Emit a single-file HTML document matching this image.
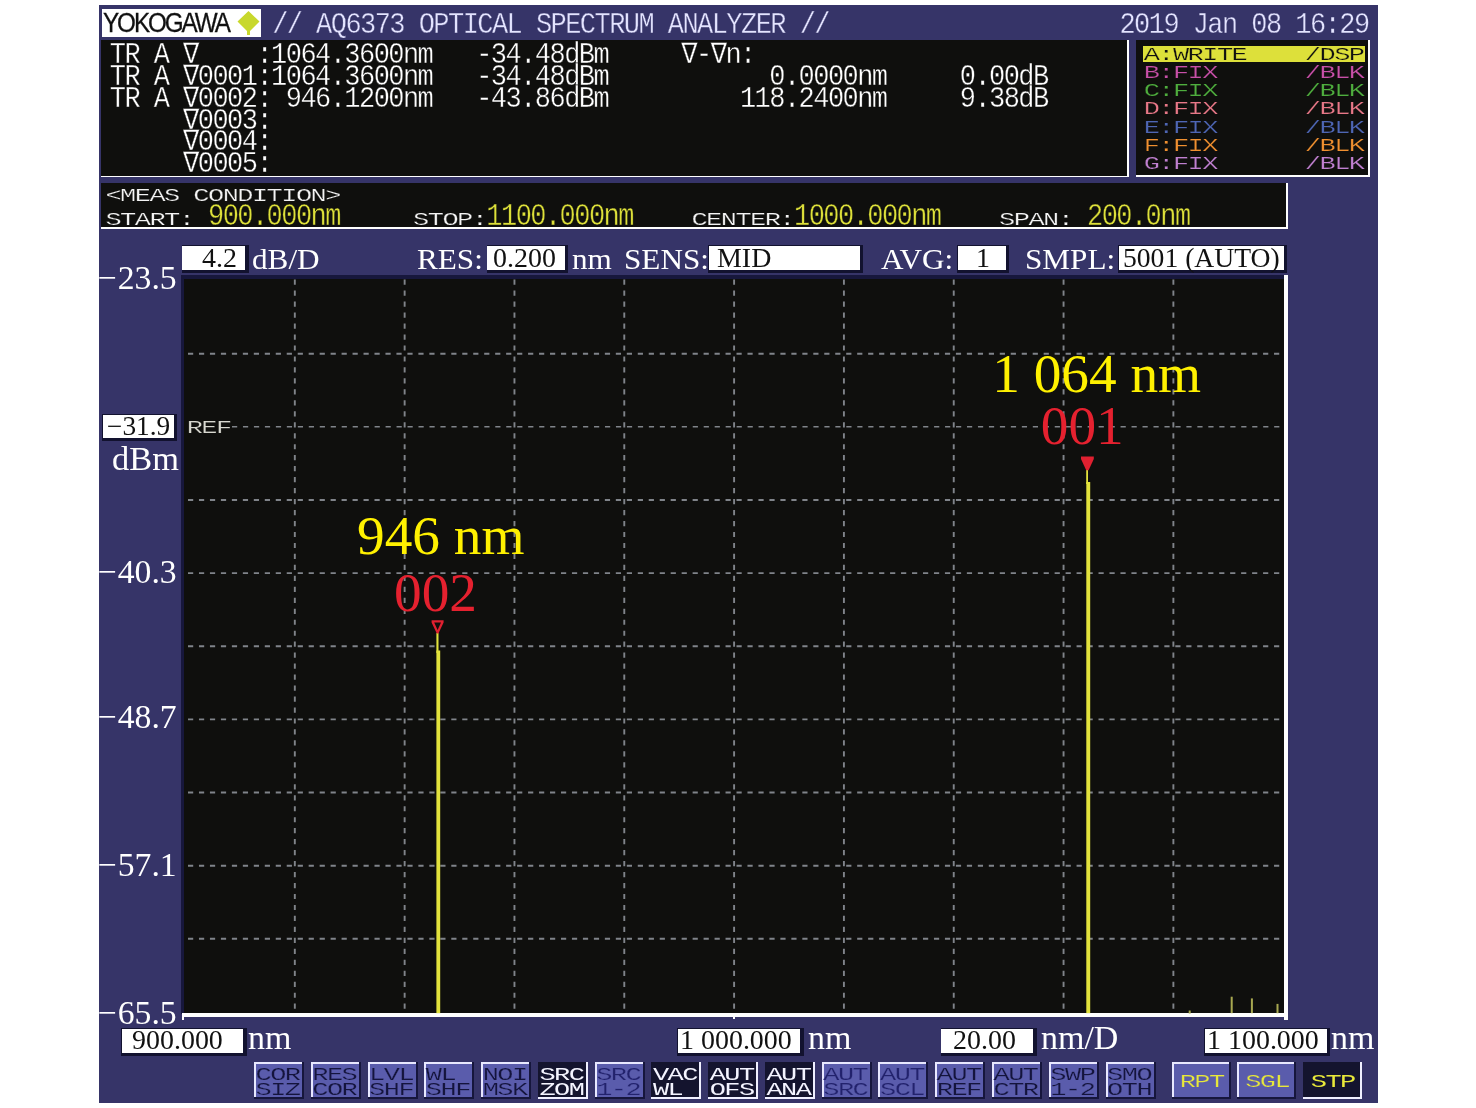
<!DOCTYPE html>
<html lang="en"><head><meta charset="utf-8"><title>AQ6373 Optical Spectrum Analyzer</title>
<style>
html,body{margin:0;padding:0;background:#fff;}
body{width:1476px;height:1108px;position:relative;overflow:hidden;}
#screen{position:absolute;left:0;top:0;width:1476px;height:1108px;will-change:transform;}
.r{position:absolute;}
.m,.s,.logo{position:absolute;white-space:pre;line-height:1;transform-origin:0 0;}
.m{font-family:"Liberation Mono","DejaVu Sans Mono",monospace;-webkit-text-stroke:0.35px #0f0f0d;}
.tb{-webkit-text-stroke-color:#363468;}
.ty{-webkit-text-stroke-color:#dde03a;}
.tk{-webkit-text-stroke-color:#5a5cac;}
.tkd{-webkit-text-stroke:0;}
.w{font-weight:normal;}
.s{font-family:"Liberation Serif",serif;}
.logo{font-family:"Liberation Sans",sans-serif;font-size:27px;letter-spacing:-2.3px;color:#111;-webkit-text-stroke:0.3px #111;transform:scale(0.898,1);}
</style></head>
<body>
<div id="screen">
<div class="r" style="left:98.70px;top:5.20px;width:1279.30px;height:1097.60px;background:#363468;"></div>
<div class="r" style="left:101.80px;top:9.00px;width:159.20px;height:27.60px;background:#fff;"></div>
<span class="logo" style="left:103.0px;top:10.2px;">YOKOGAWA</span>
<svg class="r" style="left:232.8px;top:10px" width="32" height="27" viewBox="0 0 32 27"><path d="M15.5 1 L26.5 11.5 L17 21 L17 25 L14 25 L14 21 L4.5 11.5 Z" fill="#c8d82c"/></svg>
<span class="m tb" style="left:272.15px;top:10.85px;font-size:27.0px;letter-spacing:-1.550px;color:#e4e4ff;transform:scale(1.0,1.09);">// AQ6373 OPTICAL SPECTRUM ANALYZER //</span>
<span class="m tb" style="left:1119.45px;top:10.85px;font-size:27.0px;letter-spacing:-1.550px;color:#e4e4ff;transform:scale(1.0,1.09);">2019 Jan 08 16:29</span>
<div class="r" style="left:100.50px;top:40.00px;width:1028.10px;height:137.30px;background:#fff;"></div>
<div class="r" style="left:100.50px;top:40.00px;width:1026.20px;height:135.50px;background:#0f0f0d;"></div>
<span class="m" style="left:109.85px;top:41.45px;font-size:27.0px;letter-spacing:-1.550px;color:#fff;transform:scale(1.0,1.09);">TR A ∇    :1064.3600nm   -34.48dBm     ∇-∇n:</span>
<span class="m" style="left:109.85px;top:63.15px;font-size:27.0px;letter-spacing:-1.550px;color:#fff;transform:scale(1.0,1.09);">TR A ∇0001:1064.3600nm   -34.48dBm           0.0000nm     0.00dB</span>
<span class="m" style="left:109.85px;top:84.85px;font-size:27.0px;letter-spacing:-1.550px;color:#fff;transform:scale(1.0,1.09);">TR A ∇0002: 946.1200nm   -43.86dBm         118.2400nm     9.38dB</span>
<span class="m" style="left:183.10px;top:106.55px;font-size:27.0px;letter-spacing:-1.550px;color:#fff;transform:scale(1.0,1.09);">∇0003:</span>
<span class="m" style="left:183.10px;top:128.25px;font-size:27.0px;letter-spacing:-1.550px;color:#fff;transform:scale(1.0,1.09);">∇0004:</span>
<span class="m" style="left:183.10px;top:150.05px;font-size:27.0px;letter-spacing:-1.550px;color:#fff;transform:scale(1.0,1.09);">∇0005:</span>
<div class="r" style="left:1136.20px;top:40.00px;width:234.10px;height:137.00px;background:#fff;"></div>
<div class="r" style="left:1136.20px;top:40.00px;width:231.90px;height:135.00px;background:#0f0f0d;"></div>
<div class="r" style="left:1142.60px;top:46.10px;width:222.00px;height:15.50px;background:#dde03a;"></div>
<span class="m w ty" style="left:1143.65px;top:46.13px;font-size:27.0px;letter-spacing:-1.550px;color:#101010;transform:scale(1.0,0.68);">A:WRITE    /DSP</span>
<span class="m w" style="left:1143.65px;top:64.43px;font-size:27.0px;letter-spacing:-1.550px;color:#c850a8;transform:scale(1.0,0.68);">B:FIX      /BLK</span>
<span class="m w" style="left:1143.65px;top:82.13px;font-size:27.0px;letter-spacing:-1.550px;color:#4fae3e;transform:scale(1.0,0.68);">C:FIX      /BLK</span>
<span class="m w" style="left:1143.65px;top:100.33px;font-size:27.0px;letter-spacing:-1.550px;color:#e87888;transform:scale(1.0,0.68);">D:FIX      /BLK</span>
<span class="m w" style="left:1143.65px;top:118.53px;font-size:27.0px;letter-spacing:-1.550px;color:#4e66b4;transform:scale(1.0,0.68);">E:FIX      /BLK</span>
<span class="m w" style="left:1143.65px;top:136.93px;font-size:27.0px;letter-spacing:-1.550px;color:#f09030;transform:scale(1.0,0.68);">F:FIX      /BLK</span>
<span class="m w" style="left:1143.65px;top:155.33px;font-size:27.0px;letter-spacing:-1.550px;color:#c080d0;transform:scale(1.0,0.68);">G:FIX      /BLK</span>
<div class="r" style="left:101.00px;top:183.20px;width:1187.00px;height:46.10px;background:#fff;"></div>
<div class="r" style="left:101.00px;top:183.20px;width:1185.00px;height:44.10px;background:#0f0f0d;"></div>
<span class="m w" style="left:105.45px;top:186.73px;font-size:27.0px;letter-spacing:-1.550px;color:#f4f4f4;transform:scale(1.0,0.68);">&lt;MEAS CONDITION&gt;</span>
<span class="m w" style="left:105.45px;top:210.93px;font-size:27.0px;letter-spacing:-1.550px;color:#f4f4f4;transform:scale(1.0,0.68);">START:</span>
<span class="m" style="left:208.00px;top:202.33px;font-size:27.0px;letter-spacing:-1.550px;color:#dde03a;transform:scale(1.0,1.13);">900.000nm</span>
<span class="m w" style="left:413.10px;top:210.93px;font-size:27.0px;letter-spacing:-1.550px;color:#f4f4f4;transform:scale(1.0,0.68);">STOP:</span>
<span class="m" style="left:486.35px;top:202.33px;font-size:27.0px;letter-spacing:-1.550px;color:#dde03a;transform:scale(1.0,1.13);">1100.000nm</span>
<span class="m w" style="left:691.45px;top:210.93px;font-size:27.0px;letter-spacing:-1.550px;color:#f4f4f4;transform:scale(1.0,0.68);">CENTER:</span>
<span class="m" style="left:794.00px;top:202.33px;font-size:27.0px;letter-spacing:-1.550px;color:#dde03a;transform:scale(1.0,1.13);">1000.000nm</span>
<span class="m w" style="left:999.10px;top:210.93px;font-size:27.0px;letter-spacing:-1.550px;color:#f4f4f4;transform:scale(1.0,0.68);">SPAN:</span>
<span class="m" style="left:1087.00px;top:202.33px;font-size:27.0px;letter-spacing:-1.550px;color:#dde03a;transform:scale(1.0,1.13);">200.0nm</span>
<div class="r" style="left:181.60px;top:245.00px;width:67.10px;height:28.40px;background:#12122f;"></div>
<div class="r" style="left:182.40px;top:245.80px;width:63.10px;height:24.60px;background:#fff;"></div>
<span class="s" style="left:202.00px;top:244.99px;font-size:27.0px;color:#111;transform:scaleX(1.035);">4.2</span>
<span class="s" style="left:251.50px;top:244.06px;font-size:30.14px;color:#fff;transform:scaleX(1.035);">dB/D</span>
<span class="s" style="left:416.50px;top:244.06px;font-size:30.14px;color:#fff;transform:scaleX(1.035);">RES:</span>
<div class="r" style="left:486.50px;top:245.00px;width:81.90px;height:28.40px;background:#12122f;"></div>
<div class="r" style="left:487.30px;top:245.80px;width:77.90px;height:24.60px;background:#fff;"></div>
<span class="s" style="left:492.50px;top:244.99px;font-size:27.0px;color:#111;transform:scaleX(1.035);">0.200</span>
<span class="s" style="left:571.50px;top:244.06px;font-size:30.14px;color:#fff;transform:scaleX(1.035);">nm</span>
<span class="s" style="left:623.50px;top:244.06px;font-size:30.14px;color:#fff;transform:scaleX(1.035);">SENS:</span>
<div class="r" style="left:708.30px;top:245.00px;width:154.90px;height:28.40px;background:#12122f;"></div>
<div class="r" style="left:709.10px;top:245.80px;width:150.90px;height:24.60px;background:#fff;"></div>
<span class="s" style="left:716.50px;top:244.99px;font-size:27.0px;color:#111;transform:scaleX(1.035);">MID</span>
<span class="s" style="left:880.50px;top:244.06px;font-size:30.14px;color:#fff;transform:scaleX(1.035);">AVG:</span>
<div class="r" style="left:957.00px;top:245.00px;width:52.20px;height:28.40px;background:#12122f;"></div>
<div class="r" style="left:957.80px;top:245.80px;width:48.20px;height:24.60px;background:#fff;"></div>
<span class="s" style="left:975.50px;top:244.99px;font-size:27.0px;color:#111;transform:scaleX(1.035);">1</span>
<span class="s" style="left:1024.50px;top:244.06px;font-size:30.14px;color:#fff;transform:scaleX(1.035);">SMPL:</span>
<div class="r" style="left:1117.90px;top:245.00px;width:169.30px;height:28.40px;background:#12122f;"></div>
<div class="r" style="left:1118.70px;top:245.80px;width:165.30px;height:24.60px;background:#fff;"></div>
<span class="s" style="left:1122.80px;top:245.24px;font-size:26.7px;color:#111;transform:scaleX(1.035);">5001 (AUTO)</span>
<div class="r" style="left:180.80px;top:274.80px;width:1103.80px;height:739.40px;background:#17173c;"></div>
<div class="r" style="left:183.60px;top:279.20px;width:1100.50px;height:734.50px;background:#0f0f0d;"></div>
<div class="r" style="left:1284.20px;top:274.60px;width:4.00px;height:745.00px;background:#fff;"></div>
<div class="r" style="left:181.60px;top:1013.00px;width:1106.60px;height:4.10px;background:#fff;"></div>
<div class="r" style="left:181.60px;top:1013.00px;width:2.40px;height:7.00px;background:#fff;"></div>
<div class="r" style="left:733.00px;top:1013.00px;width:2.30px;height:6.20px;background:#fff;"></div>
<svg class="r" style="left:0;top:0" width="1476" height="1108" viewBox="0 0 1476 1108"><line x1="294.82" x2="294.82" y1="279.6" y2="1013.2" stroke="#80848a" stroke-width="1.9" stroke-dasharray="5.2 5.77"/><line x1="404.64" x2="404.64" y1="279.6" y2="1013.2" stroke="#80848a" stroke-width="1.9" stroke-dasharray="5.2 5.77"/><line x1="514.46" x2="514.46" y1="279.6" y2="1013.2" stroke="#80848a" stroke-width="1.9" stroke-dasharray="5.2 5.77"/><line x1="624.28" x2="624.28" y1="279.6" y2="1013.2" stroke="#80848a" stroke-width="1.9" stroke-dasharray="5.2 5.77"/><line x1="734.10" x2="734.10" y1="279.6" y2="1013.2" stroke="#80848a" stroke-width="1.9" stroke-dasharray="5.2 5.77"/><line x1="843.92" x2="843.92" y1="279.6" y2="1013.2" stroke="#80848a" stroke-width="1.9" stroke-dasharray="5.2 5.77"/><line x1="953.74" x2="953.74" y1="279.6" y2="1013.2" stroke="#80848a" stroke-width="1.9" stroke-dasharray="5.2 5.77"/><line x1="1063.56" x2="1063.56" y1="279.6" y2="1013.2" stroke="#80848a" stroke-width="1.9" stroke-dasharray="5.2 5.77"/><line x1="1173.38" x2="1173.38" y1="279.6" y2="1013.2" stroke="#80848a" stroke-width="1.9" stroke-dasharray="5.2 5.77"/><line x1="188.0" x2="1283.6" y1="353.70" y2="353.70" stroke="#80848a" stroke-width="1.9" stroke-dasharray="5.2 5.77"/><line x1="232.0" x2="1283.6" y1="426.84" y2="426.84" stroke="#80848a" stroke-width="1.5" stroke-dasharray="5.2 5.77"/><line x1="188.0" x2="1283.6" y1="499.98" y2="499.98" stroke="#80848a" stroke-width="1.9" stroke-dasharray="5.2 5.77"/><line x1="188.0" x2="1283.6" y1="573.12" y2="573.12" stroke="#80848a" stroke-width="1.9" stroke-dasharray="5.2 5.77"/><line x1="188.0" x2="1283.6" y1="646.26" y2="646.26" stroke="#80848a" stroke-width="1.9" stroke-dasharray="5.2 5.77"/><line x1="188.0" x2="1283.6" y1="719.40" y2="719.40" stroke="#80848a" stroke-width="1.9" stroke-dasharray="5.2 5.77"/><line x1="188.0" x2="1283.6" y1="792.54" y2="792.54" stroke="#80848a" stroke-width="1.9" stroke-dasharray="5.2 5.77"/><line x1="188.0" x2="1283.6" y1="865.68" y2="865.68" stroke="#80848a" stroke-width="1.9" stroke-dasharray="5.2 5.77"/><line x1="188.0" x2="1283.6" y1="938.82" y2="938.82" stroke="#80848a" stroke-width="1.9" stroke-dasharray="5.2 5.77"/><rect x="1086.2" y="470" width="1.8" height="14" fill="#e2e23c"/><rect x="1086.3" y="482" width="3.9" height="531.2" fill="#e2e23c"/><rect x="436.4" y="633" width="2.1" height="20" fill="#e2e23c"/><rect x="436.4" y="650.5" width="3.8" height="362.70000000000005" fill="#e2e23c"/><rect x="1230.7" y="996.7" width="2" height="16.5" fill="#a8a850"/><rect x="1250.9" y="998.4" width="2" height="14.8" fill="#a8a850"/><rect x="1276.5" y="1003.9" width="2" height="9.3" fill="#a8a850"/><rect x="1188.7" y="1010.5" width="2" height="3" fill="#a8a850"/><path d="M1081 456.6 L1093.8 456.6 L1093.8 459 L1088.6 470.2 L1086.2 470.2 L1081 459 Z" fill="#e02030"/><path d="M431.6 620.2 L443.6 620.2 L443.6 622.4 L438.4 633.5 L436.8 633.5 L431.6 622.4 Z M434.2 622.6 L437.6 630 L441 622.6 Z" fill="#e02030" fill-rule="evenodd"/></svg>
<span class="m w" style="left:186.65px;top:418.53px;font-size:27.0px;letter-spacing:-1.550px;color:#d8d8d0;transform:scale(1.0,0.68);">REF</span>
<span class="s" style="left:992.20px;top:345.89px;font-size:55.3px;color:#fff100;transform:scaleX(1);">1 064 nm</span>
<span class="s" style="left:1040.80px;top:398.49px;font-size:55.3px;color:#e5212f;transform:scaleX(1);">001</span>
<span class="s" style="left:357.00px;top:507.69px;font-size:55.3px;color:#fff100;transform:scaleX(1);">946 nm</span>
<span class="s" style="left:394.00px;top:564.89px;font-size:55.3px;color:#e5212f;transform:scaleX(1);">002</span>
<span class="s" style="left:97.40px;top:261.28px;font-size:33.7px;color:#fff;transform:scaleX(1);"><span style="letter-spacing:1.3px">−</span>23.5</span>
<span class="s" style="left:97.40px;top:555.08px;font-size:33.7px;color:#fff;transform:scaleX(1);"><span style="letter-spacing:1.3px">−</span>40.3</span>
<span class="s" style="left:97.40px;top:699.98px;font-size:33.7px;color:#fff;transform:scaleX(1);"><span style="letter-spacing:1.3px">−</span>48.7</span>
<span class="s" style="left:97.40px;top:848.08px;font-size:33.7px;color:#fff;transform:scaleX(1);"><span style="letter-spacing:1.3px">−</span>57.1</span>
<span class="s" style="left:97.40px;top:995.68px;font-size:33.7px;color:#fff;transform:scaleX(1);"><span style="letter-spacing:1.3px">−</span>65.5</span>
<div class="r" style="left:102.40px;top:414.00px;width:74.80px;height:27.20px;background:#12122f;"></div>
<div class="r" style="left:103.20px;top:414.80px;width:70.80px;height:23.40px;background:#fff;"></div>
<span class="s" style="left:106.80px;top:412.89px;font-size:26.4px;color:#111;transform:scaleX(1.035);">−31.9</span>
<span class="s" style="left:112.00px;top:442.06px;font-size:33.24px;color:#fff;transform:scaleX(1.035);">dBm</span>
<div class="r" style="left:120.80px;top:1028.40px;width:125.80px;height:27.50px;background:#12122f;"></div>
<div class="r" style="left:121.60px;top:1029.20px;width:121.80px;height:23.70px;background:#fff;"></div>
<span class="s" style="left:132.40px;top:1027.19px;font-size:27.0px;color:#111;transform:scaleX(1.035);">900.000</span>
<span class="s" style="left:247.60px;top:1021.69px;font-size:32.85px;color:#fff;transform:scaleX(1.035);">nm</span>
<div class="r" style="left:677.10px;top:1028.20px;width:126.60px;height:27.80px;background:#12122f;"></div>
<div class="r" style="left:677.90px;top:1029.00px;width:122.60px;height:24.00px;background:#fff;"></div>
<span class="s" style="left:679.50px;top:1027.19px;font-size:27.0px;color:#111;transform:scaleX(1.035);">1 000.000</span>
<span class="s" style="left:808.30px;top:1021.69px;font-size:32.85px;color:#fff;transform:scaleX(1.035);">nm</span>
<div class="r" style="left:940.50px;top:1028.20px;width:96.00px;height:27.80px;background:#12122f;"></div>
<div class="r" style="left:941.30px;top:1029.00px;width:92.00px;height:24.00px;background:#fff;"></div>
<span class="s" style="left:953.00px;top:1027.19px;font-size:27.0px;color:#111;transform:scaleX(1.035);">20.00</span>
<span class="s" style="left:1040.50px;top:1021.69px;font-size:32.85px;color:#fff;transform:scaleX(1.035);">nm/D</span>
<div class="r" style="left:1203.70px;top:1028.20px;width:126.30px;height:27.80px;background:#12122f;"></div>
<div class="r" style="left:1204.50px;top:1029.00px;width:122.30px;height:24.00px;background:#fff;"></div>
<span class="s" style="left:1207.30px;top:1027.19px;font-size:27.0px;color:#111;transform:scaleX(1.035);">1 100.000</span>
<span class="s" style="left:1330.90px;top:1021.69px;font-size:32.85px;color:#fff;transform:scaleX(1.035);">nm</span>
<div class="r" style="left:254.00px;top:1062.40px;width:50.00px;height:36.20px;background:#16163c;"></div>
<div class="r" style="left:254.00px;top:1062.40px;width:48.00px;height:34.20px;background:#e8e8ff;"></div>
<div class="r" style="left:256.00px;top:1064.40px;width:46.00px;height:32.20px;background:#5a5cac;"></div>
<span class="m w tk" style="left:255.55px;top:1066.03px;font-size:27.0px;letter-spacing:-1.550px;color:#14143c;transform:scale(1.0,0.68);">COR</span>
<span class="m w tk" style="left:255.55px;top:1081.33px;font-size:27.0px;letter-spacing:-1.550px;color:#14143c;transform:scale(1.0,0.68);">SIZ</span>
<div class="r" style="left:310.77px;top:1062.40px;width:50.00px;height:36.20px;background:#16163c;"></div>
<div class="r" style="left:310.77px;top:1062.40px;width:48.00px;height:34.20px;background:#e8e8ff;"></div>
<div class="r" style="left:312.77px;top:1064.40px;width:46.00px;height:32.20px;background:#5a5cac;"></div>
<span class="m w tk" style="left:312.32px;top:1066.03px;font-size:27.0px;letter-spacing:-1.550px;color:#14143c;transform:scale(1.0,0.68);">RES</span>
<span class="m w tk" style="left:312.32px;top:1081.33px;font-size:27.0px;letter-spacing:-1.550px;color:#14143c;transform:scale(1.0,0.68);">COR</span>
<div class="r" style="left:367.54px;top:1062.40px;width:50.00px;height:36.20px;background:#16163c;"></div>
<div class="r" style="left:367.54px;top:1062.40px;width:48.00px;height:34.20px;background:#e8e8ff;"></div>
<div class="r" style="left:369.54px;top:1064.40px;width:46.00px;height:32.20px;background:#5a5cac;"></div>
<span class="m w tk" style="left:369.09px;top:1066.03px;font-size:27.0px;letter-spacing:-1.550px;color:#14143c;transform:scale(1.0,0.68);">LVL</span>
<span class="m w tk" style="left:369.09px;top:1081.33px;font-size:27.0px;letter-spacing:-1.550px;color:#14143c;transform:scale(1.0,0.68);">SHF</span>
<div class="r" style="left:424.31px;top:1062.40px;width:50.00px;height:36.20px;background:#16163c;"></div>
<div class="r" style="left:424.31px;top:1062.40px;width:48.00px;height:34.20px;background:#e8e8ff;"></div>
<div class="r" style="left:426.31px;top:1064.40px;width:46.00px;height:32.20px;background:#5a5cac;"></div>
<span class="m w tk" style="left:425.86px;top:1066.03px;font-size:27.0px;letter-spacing:-1.550px;color:#14143c;transform:scale(1.0,0.68);">WL</span>
<span class="m w tk" style="left:425.86px;top:1081.33px;font-size:27.0px;letter-spacing:-1.550px;color:#14143c;transform:scale(1.0,0.68);">SHF</span>
<div class="r" style="left:481.08px;top:1062.40px;width:50.00px;height:36.20px;background:#16163c;"></div>
<div class="r" style="left:481.08px;top:1062.40px;width:48.00px;height:34.20px;background:#e8e8ff;"></div>
<div class="r" style="left:483.08px;top:1064.40px;width:46.00px;height:32.20px;background:#5a5cac;"></div>
<span class="m w tk" style="left:482.63px;top:1066.03px;font-size:27.0px;letter-spacing:-1.550px;color:#14143c;transform:scale(1.0,0.68);">NOI</span>
<span class="m w tk" style="left:482.63px;top:1081.33px;font-size:27.0px;letter-spacing:-1.550px;color:#14143c;transform:scale(1.0,0.68);">MSK</span>
<div class="r" style="left:537.85px;top:1062.40px;width:50.00px;height:36.20px;background:#f0f0ff;"></div>
<div class="r" style="left:537.85px;top:1062.40px;width:48.00px;height:34.20px;background:#14142e;"></div>
<span class="m w tkd" style="left:539.40px;top:1066.03px;font-size:27.0px;letter-spacing:-1.550px;color:#f4f4ff;transform:scale(1.0,0.68);">SRC</span>
<span class="m w tkd" style="left:539.40px;top:1081.33px;font-size:27.0px;letter-spacing:-1.550px;color:#f4f4ff;transform:scale(1.0,0.68);">ZOM</span>
<div class="r" style="left:594.62px;top:1062.40px;width:50.00px;height:36.20px;background:#16163c;"></div>
<div class="r" style="left:594.62px;top:1062.40px;width:48.00px;height:34.20px;background:#e8e8ff;"></div>
<div class="r" style="left:596.62px;top:1064.40px;width:46.00px;height:32.20px;background:#5a5cac;"></div>
<span class="m w tk" style="left:596.17px;top:1066.03px;font-size:27.0px;letter-spacing:-1.550px;color:#22226c;transform:scale(1.0,0.68);">SRC</span>
<span class="m w tk" style="left:596.17px;top:1081.33px;font-size:27.0px;letter-spacing:-1.550px;color:#22226c;transform:scale(1.0,0.68);">1-2</span>
<div class="r" style="left:651.39px;top:1062.40px;width:50.00px;height:36.20px;background:#f0f0ff;"></div>
<div class="r" style="left:651.39px;top:1062.40px;width:48.00px;height:34.20px;background:#14142e;"></div>
<span class="m w tkd" style="left:652.94px;top:1066.03px;font-size:27.0px;letter-spacing:-1.550px;color:#f4f4ff;transform:scale(1.0,0.68);">VAC</span>
<span class="m w tkd" style="left:652.94px;top:1081.33px;font-size:27.0px;letter-spacing:-1.550px;color:#f4f4ff;transform:scale(1.0,0.68);">WL</span>
<div class="r" style="left:708.16px;top:1062.40px;width:50.00px;height:36.20px;background:#f0f0ff;"></div>
<div class="r" style="left:708.16px;top:1062.40px;width:48.00px;height:34.20px;background:#14142e;"></div>
<span class="m w tkd" style="left:709.71px;top:1066.03px;font-size:27.0px;letter-spacing:-1.550px;color:#f4f4ff;transform:scale(1.0,0.68);">AUT</span>
<span class="m w tkd" style="left:709.71px;top:1081.33px;font-size:27.0px;letter-spacing:-1.550px;color:#f4f4ff;transform:scale(1.0,0.68);">OFS</span>
<div class="r" style="left:764.93px;top:1062.40px;width:50.00px;height:36.20px;background:#f0f0ff;"></div>
<div class="r" style="left:764.93px;top:1062.40px;width:48.00px;height:34.20px;background:#14142e;"></div>
<span class="m w tkd" style="left:766.48px;top:1066.03px;font-size:27.0px;letter-spacing:-1.550px;color:#f4f4ff;transform:scale(1.0,0.68);">AUT</span>
<span class="m w tkd" style="left:766.48px;top:1081.33px;font-size:27.0px;letter-spacing:-1.550px;color:#f4f4ff;transform:scale(1.0,0.68);">ANA</span>
<div class="r" style="left:821.70px;top:1062.40px;width:50.00px;height:36.20px;background:#16163c;"></div>
<div class="r" style="left:821.70px;top:1062.40px;width:48.00px;height:34.20px;background:#e8e8ff;"></div>
<div class="r" style="left:823.70px;top:1064.40px;width:46.00px;height:32.20px;background:#5a5cac;"></div>
<span class="m w tk" style="left:823.25px;top:1066.03px;font-size:27.0px;letter-spacing:-1.550px;color:#22226c;transform:scale(1.0,0.68);">AUT</span>
<span class="m w tk" style="left:823.25px;top:1081.33px;font-size:27.0px;letter-spacing:-1.550px;color:#22226c;transform:scale(1.0,0.68);">SRC</span>
<div class="r" style="left:878.47px;top:1062.40px;width:50.00px;height:36.20px;background:#16163c;"></div>
<div class="r" style="left:878.47px;top:1062.40px;width:48.00px;height:34.20px;background:#e8e8ff;"></div>
<div class="r" style="left:880.47px;top:1064.40px;width:46.00px;height:32.20px;background:#5a5cac;"></div>
<span class="m w tk" style="left:880.02px;top:1066.03px;font-size:27.0px;letter-spacing:-1.550px;color:#22226c;transform:scale(1.0,0.68);">AUT</span>
<span class="m w tk" style="left:880.02px;top:1081.33px;font-size:27.0px;letter-spacing:-1.550px;color:#22226c;transform:scale(1.0,0.68);">SCL</span>
<div class="r" style="left:935.24px;top:1062.40px;width:50.00px;height:36.20px;background:#16163c;"></div>
<div class="r" style="left:935.24px;top:1062.40px;width:48.00px;height:34.20px;background:#e8e8ff;"></div>
<div class="r" style="left:937.24px;top:1064.40px;width:46.00px;height:32.20px;background:#5a5cac;"></div>
<span class="m w tk" style="left:936.79px;top:1066.03px;font-size:27.0px;letter-spacing:-1.550px;color:#14143c;transform:scale(1.0,0.68);">AUT</span>
<span class="m w tk" style="left:936.79px;top:1081.33px;font-size:27.0px;letter-spacing:-1.550px;color:#14143c;transform:scale(1.0,0.68);">REF</span>
<div class="r" style="left:992.01px;top:1062.40px;width:50.00px;height:36.20px;background:#16163c;"></div>
<div class="r" style="left:992.01px;top:1062.40px;width:48.00px;height:34.20px;background:#e8e8ff;"></div>
<div class="r" style="left:994.01px;top:1064.40px;width:46.00px;height:32.20px;background:#5a5cac;"></div>
<span class="m w tk" style="left:993.56px;top:1066.03px;font-size:27.0px;letter-spacing:-1.550px;color:#14143c;transform:scale(1.0,0.68);">AUT</span>
<span class="m w tk" style="left:993.56px;top:1081.33px;font-size:27.0px;letter-spacing:-1.550px;color:#14143c;transform:scale(1.0,0.68);">CTR</span>
<div class="r" style="left:1048.78px;top:1062.40px;width:50.00px;height:36.20px;background:#16163c;"></div>
<div class="r" style="left:1048.78px;top:1062.40px;width:48.00px;height:34.20px;background:#e8e8ff;"></div>
<div class="r" style="left:1050.78px;top:1064.40px;width:46.00px;height:32.20px;background:#5a5cac;"></div>
<span class="m w tk" style="left:1050.33px;top:1066.03px;font-size:27.0px;letter-spacing:-1.550px;color:#14143c;transform:scale(1.0,0.68);">SWP</span>
<span class="m w tk" style="left:1050.33px;top:1081.33px;font-size:27.0px;letter-spacing:-1.550px;color:#14143c;transform:scale(1.0,0.68);">1-2</span>
<div class="r" style="left:1105.55px;top:1062.40px;width:50.00px;height:36.20px;background:#16163c;"></div>
<div class="r" style="left:1105.55px;top:1062.40px;width:48.00px;height:34.20px;background:#e8e8ff;"></div>
<div class="r" style="left:1107.55px;top:1064.40px;width:46.00px;height:32.20px;background:#5a5cac;"></div>
<span class="m w tk" style="left:1107.10px;top:1066.03px;font-size:27.0px;letter-spacing:-1.550px;color:#14143c;transform:scale(1.0,0.68);">SMO</span>
<span class="m w tk" style="left:1107.10px;top:1081.33px;font-size:27.0px;letter-spacing:-1.550px;color:#14143c;transform:scale(1.0,0.68);">OTH</span>
<div class="r" style="left:1171.60px;top:1062.20px;width:59.20px;height:37.10px;background:#16163c;"></div>
<div class="r" style="left:1171.60px;top:1062.20px;width:57.20px;height:35.10px;background:#e8e8ff;"></div>
<div class="r" style="left:1173.60px;top:1064.20px;width:55.20px;height:33.10px;background:#5a5cac;"></div>
<span class="m w tk" style="left:1179.65px;top:1073.33px;font-size:27.0px;letter-spacing:-1.550px;color:#e8e83a;transform:scale(1.0,0.68);">RPT</span>
<div class="r" style="left:1237.15px;top:1062.20px;width:59.20px;height:37.10px;background:#16163c;"></div>
<div class="r" style="left:1237.15px;top:1062.20px;width:57.20px;height:35.10px;background:#e8e8ff;"></div>
<div class="r" style="left:1239.15px;top:1064.20px;width:55.20px;height:33.10px;background:#5a5cac;"></div>
<span class="m w tk" style="left:1245.20px;top:1073.33px;font-size:27.0px;letter-spacing:-1.550px;color:#e8e83a;transform:scale(1.0,0.68);">SGL</span>
<div class="r" style="left:1302.70px;top:1062.20px;width:59.20px;height:37.10px;background:#f0f0ff;"></div>
<div class="r" style="left:1302.70px;top:1062.20px;width:57.20px;height:35.10px;background:#14142e;"></div>
<span class="m w tkd" style="left:1310.75px;top:1073.33px;font-size:27.0px;letter-spacing:-1.550px;color:#e8e83a;transform:scale(1.0,0.68);">STP</span>
</div>
</body></html>
